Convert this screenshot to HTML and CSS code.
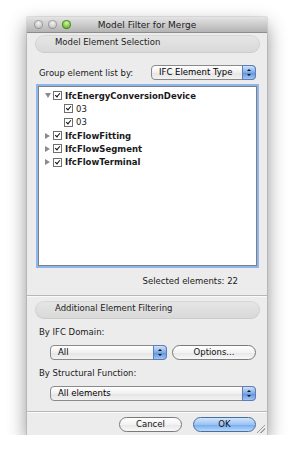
FILE: index.html
```html
<!DOCTYPE html>
<html lang="en">
<head>
    <meta charset="UTF-8">
    <title>Model Filter for Merge</title>
    <link rel="stylesheet" href="styles.css">
</head>
<body>
    <div class="window">
        <div class="titlebar">
            <div class="lights">
                <span class="light"></span>
                <span class="light"></span>
                <span class="light green"></span>
            </div>
            <div class="title">Model Filter for Merge</div>
        </div>

        <div class="pill">Model Element Selection</div>

        <div class="row group-row">
            <span class="label">Group element list by:</span>
            <div class="popup type-popup">IFC Element Type<span class="arrows"></span></div>
        </div>

        <div class="list">
            <div class="node open bold"><span class="tri down"></span><span class="check"></span>IfcEnergyConversionDevice</div>
            <div class="node child"><span class="check"></span>03</div>
            <div class="node child"><span class="check"></span>03</div>
            <div class="node bold"><span class="tri"></span><span class="check"></span>IfcFlowFitting</div>
            <div class="node bold"><span class="tri"></span><span class="check"></span>IfcFlowSegment</div>
            <div class="node bold"><span class="tri"></span><span class="check"></span>IfcFlowTerminal</div>
        </div>

        <div class="count">Selected elements: 22</div>

        <hr class="sep">

        <div class="pill">Additional Element Filtering</div>

        <div class="label sub">By IFC Domain:</div>
        <div class="row indent">
            <div class="popup domain-popup">All<span class="arrows"></span></div>
            <div class="btn options">Options...</div>
        </div>

        <div class="label sub">By Structural Function:</div>
        <div class="row indent">
            <div class="popup func-popup">All elements<span class="arrows"></span></div>
        </div>

        <hr class="sep bottom-sep">

        <div class="row buttons">
            <div class="btn">Cancel</div>
            <div class="btn ok">OK</div>
        </div>
        <div class="grip"></div>
    </div>
</body>
</html>
```

FILE: styles.css
```css
body {
    margin: 0;
    background: #fff;
    font-family: "DejaVu Sans", "Liberation Sans", sans-serif;
    font-size: 8.5px;
    color: #1a1a1a;
}

.window {
    position: relative;
    margin: 17px 0 0 27px;
    width: 240px;
    height: 418px;
    background: #ececec;
    box-shadow: 0 8px 18px rgba(0, 0, 0, .45), 0 0 1px rgba(0, 0, 0, .5);
    box-sizing: border-box;
}

.titlebar {
    position: relative;
    height: 16px;
    background: linear-gradient(#e4e4e4, #b4b4b4);
    border-bottom: 1px solid #8c8c8c;
    box-sizing: border-box;
    display: flex;
    align-items: center;
}

.lights {
    display: flex;
    gap: 5px;
    padding-left: 7px;
}

.light {
    width: 9px;
    height: 9px;
    border-radius: 50%;
    background: radial-gradient(circle at 50% 35%, #f4f4f4, #bdbdbd 70%);
    box-shadow: inset 0 0 0 1px rgba(0, 0, 0, .22);
}

.light.green {
    background: radial-gradient(circle at 50% 35%, #d8f5a8, #62b32a 70%);
    box-shadow: inset 0 0 0 1px rgba(40, 90, 10, .5);
}

.title {
    position: absolute;
    left: 0;
    right: 0;
    text-align: center;
    font-size: 9px;
    color: #222;
}

.pill {
    margin: 2px 7px 0 8px;
    height: 18px;
    border-radius: 9px;
    background: linear-gradient(#e6e6e6, #d8d8d8);
    box-shadow: inset 0 0 0 1px rgba(0, 0, 0, .06);
    padding-left: 20px;
    line-height: 15px;
    color: #222;
}

.row {
    display: flex;
    align-items: center;
}

.group-row {
    margin: 12px 0 0 12px;
    height: 15px;
}

.group-row .label {
    width: 112px;
}

.popup {
    position: relative;
    height: 15px;
    box-sizing: border-box;
    border: 1px solid #8a8a8a;
    border-radius: 4px;
    background: linear-gradient(#ffffff, #f0f0f0 50%, #e4e4e4 51%, #f2f2f2);
    padding-left: 7px;
    line-height: 13px;
    color: #000;
}

.arrows {
    position: absolute;
    right: -1px;
    top: -1px;
    width: 14px;
    height: 15px;
    border-radius: 0 4px 4px 0;
    border: 1px solid #5a7fb8;
    box-sizing: border-box;
    background: linear-gradient(#cfe2fb, #7fa9e4 50%, #5c90dc 51%, #a4c6f3);
}

.arrows::before,
.arrows::after {
    content: "";
    position: absolute;
    left: 4px;
    border-left: 2px solid transparent;
    border-right: 2px solid transparent;
}

.arrows::before {
    top: 3px;
    border-bottom: 2.5px solid #111;
}

.arrows::after {
    bottom: 3px;
    border-top: 2.5px solid #111;
}

.type-popup {
    width: 105px;
}

.list {
    margin: 6px 10px 0 11px;
    height: 180px;
    background: #fff;
    border: 1px solid #7f7f7f;
    box-shadow: 0 0 0 2px #8eb6ee;
    padding-top: 2px;
    box-sizing: border-box;
}

.node {
    height: 13.3px;
    display: flex;
    align-items: center;
    padding-left: 6px;
}

.node.bold {
    font-weight: bold;
}

.node.child {
    padding-left: 25px;
}

.tri {
    width: 0;
    height: 0;
    border-top: 3px solid transparent;
    border-bottom: 3px solid transparent;
    border-left: 5px solid #8c8c8c;
    margin-right: 3px;
}

.tri.down {
    border-left: 3px solid transparent;
    border-right: 3px solid transparent;
    border-top: 5px solid #8c8c8c;
    border-bottom: 0;
    margin-right: 2px;
}

.check {
    position: relative;
    width: 7px;
    height: 7px;
    border: 1px solid #6f6f6f;
    background: #fff;
    margin-right: 3px;
}

.check::after {
    content: "";
    position: absolute;
    left: 2px;
    top: 0;
    width: 2px;
    height: 4px;
    border-right: 1.2px solid #111;
    border-bottom: 1.2px solid #111;
    transform: rotate(40deg);
}

.count {
    margin: 10px 29px 0 0;
    text-align: right;
}

.sep {
    margin: 9px 0 0;
    border: 0;
    border-top: 1px solid #b8b8b8;
    border-bottom: 1px solid #fafafa;
}

.sep + .pill {
    margin-top: 4px;
}

.label.sub {
    margin: 8px 0 0 12px;
}

.indent {
    margin: 8px 0 0 23px;
    height: 15px;
}

.domain-popup {
    width: 117px;
}

.func-popup {
    width: 206px;
}

.btn {
    height: 15px;
    box-sizing: border-box;
    border: 1px solid #7a7a7a;
    border-radius: 8px;
    background: linear-gradient(#ffffff, #f2f2f2 50%, #e6e6e6 51%, #f8f8f8);
    text-align: center;
    line-height: 13px;
    color: #111;
}

.options {
    width: 84px;
    margin-left: 5px;
}

.bottom-sep {
    margin-top: 10px;
}

.buttons {
    margin-top: 4px;
    justify-content: flex-end;
    gap: 11px;
    padding-right: 11px;
}

.buttons .btn {
    width: 63px;
}

.btn.ok {
    border-color: #4a6e9e;
    background: linear-gradient(#d2e6fc, #9cc3f3 50%, #74a9ee 51%, #b5dafc);
}

.grip {
    position: absolute;
    right: 2px;
    bottom: 2px;
    width: 8px;
    height: 8px;
    background: linear-gradient(135deg, transparent 45%, #999 46%, #999 52%, transparent 53%, transparent 68%, #999 69%, #999 75%, transparent 76%);
}
```
